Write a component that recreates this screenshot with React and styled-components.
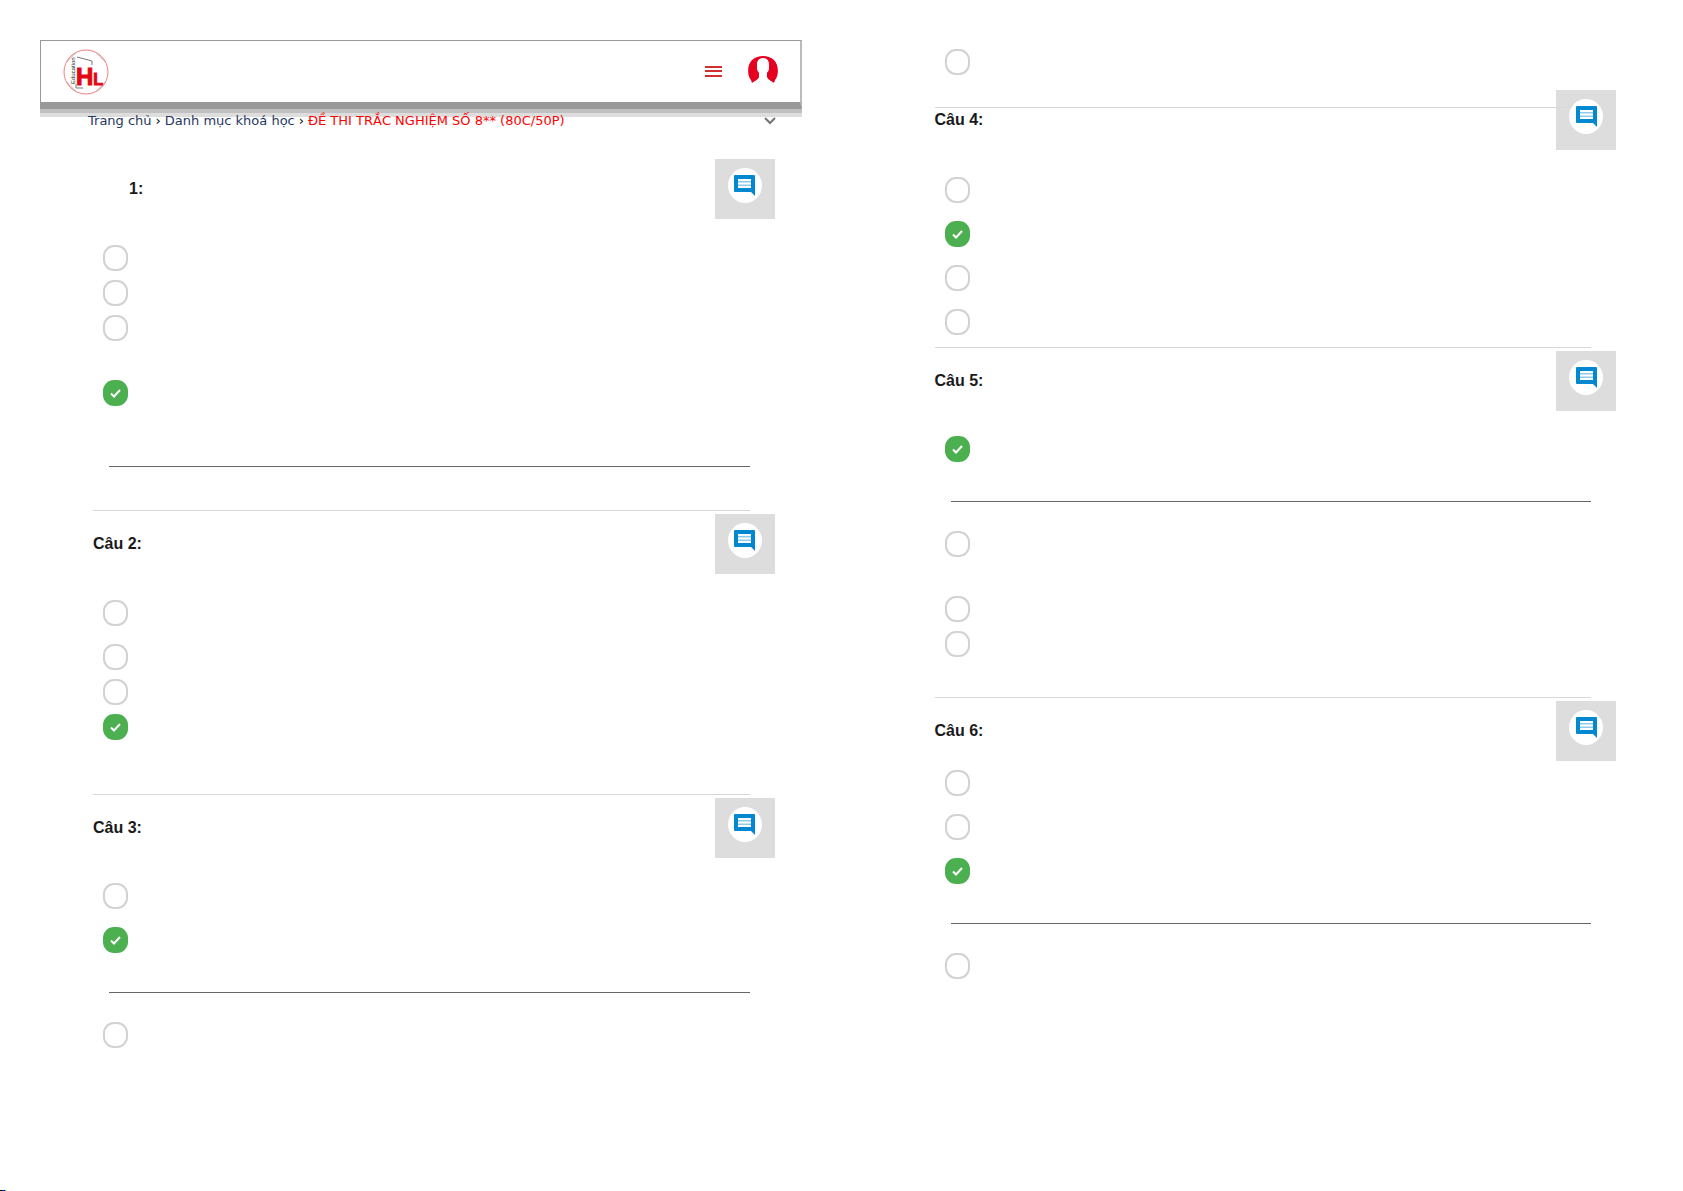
import React, { useState } from 'react';
import styled, { createGlobalStyle } from 'styled-components';

const GlobalStyle = createGlobalStyle`
    * {
        box-sizing: border-box;
    }

    body {
        margin: 0;
        background: #fff;
        color: #222;
        font-family: "Liberation Sans", Arial, sans-serif;
    }
`

const Page = styled.div`
    display: flex;
    flex-direction: column;
    min-height: 100vh;
`

const Spread = styled.main`
    display: grid;
    grid-template-columns: 1fr 1fr;
    flex: 1;
`

const Sheet = styled.div`
    padding-top: ${({ $top }) => $top}px;
`

const Header = styled.header`
    display: flex;
    align-items: center;
    height: 69px;
    margin: 0 40px;
    padding: 0 22px;
    border: 1px solid #999;
    border-right: 2px solid #bbb;
    border-bottom: 7px solid #999;
    box-shadow: 0 4px 0 #c0c0c0, 0 8px 0 #ddd;
`

const HomeLink = styled.a`
    display: flex;
    margin-right: auto;
`

const IconButton = styled.button`
    display: flex;
    padding: 0;
    border: none;
    background: none;
    color: ${({ $color }) => $color};
    cursor: pointer;
`

const HeaderActions = styled.div`
    display: flex;
    align-items: center;
    gap: 26px;
    padding-bottom: 4px;
`

const MenuButton = styled(IconButton)`
    padding-top: 4px;
`

const Breadcrumb = styled.nav`
    display: flex;
    align-items: center;
    gap: 4px;
    margin: 4px 66px 30px 88px;
    font-family: "DejaVu Sans", Verdana, sans-serif;
    font-size: 13px;
    line-height: 16px;
    white-space: nowrap;
`

const Crumb = styled.a`
    color: ${({ $current }) => ($current ? '#ff0000' : '#1f3864')};
    text-decoration: none;
`

const Separator = styled.span`
    color: #000;
`

const CrumbToggle = styled(IconButton)`
    margin-left: auto;
`

const Content = styled.div`
    padding: 0 92px 0 93px;
`

const Divider = styled.hr`
    position: relative;
    z-index: 1;
    height: 1px;
    margin: ${({ $space }) => $space}px 0 0;
    border: none;
    background: #d8d8d8;
`

const AnswerLine = styled.hr`
    height: 1px;
    margin: ${({ $space }) => $space}px 0 0 16px;
    border: none;
    background: #666;
`

const QuestionHead = styled.div`
    display: flex;
    align-items: center;
    justify-content: space-between;
    margin-top: ${({ $space }) => $space}px;
    margin-right: -25px;
`

const QuestionTitle = styled.h2`
    margin: 0 0 0 ${({ $indent }) => $indent || 0}px;
    font-size: 16px;
    line-height: 20px;
    color: #1a1a1a;
`

const CommentBox = styled.div`
    display: flex;
    justify-content: center;
    width: 60px;
    height: 60px;
    padding-top: 9px;
    background: #ddd;
`

const CommentButton = styled.button`
    position: relative;
    z-index: 2;
    display: flex;
    align-items: center;
    justify-content: center;
    width: 34px;
    height: 35px;
    padding: 0;
    border: none;
    border-radius: 50%;
    background: #fff;
    cursor: pointer;
`

const Option = styled.label`
    display: grid;
    width: 25px;
    margin: ${({ $space }) => $space}px 0 0 10px;
    place-items: center;
    cursor: pointer;

    > * {
        grid-area: 1 / 1;
    }
`

const Radio = styled.input`
    appearance: none;
    width: 25px;
    height: 26px;
    margin: 0;
    border: 2px solid #d2d2d2;
    border-radius: 11px;
    background: #fff;

    &:checked {
        border-color: #4caf50;
        background: #4caf50;
    }
`

const Tick = styled.svg`
    pointer-events: none;
`

const PrintMark = styled.div`
    width: 6px;
    height: 1px;
    background: linear-gradient(90deg, #000 40%, #22f 40% 60%, #000 60% 80%, #2cc 80%);
`

const Logo = () => (
    <svg width="46" height="46" viewBox="0 0 46 46" role="img" aria-label="HL Education">
        <circle cx="23" cy="23" r="22" fill="#fff" stroke="#f08080" strokeWidth="1" />
        <path d="M3.500 33 L13 42.500 M3.500 13 L13 3.500 M33 3.500 L42.500 13 M42.500 33 L33 42.500" stroke="#c9a0a0" />
        <path d="M14 8 L29 12 V16 M13 35 V39 H20" fill="none" stroke="#777" />
        <text x="13" y="36" fill="#e30613" stroke="#e30613" strokeWidth="1" fontFamily="'Liberation Sans Narrow', 'Liberation Sans', sans-serif" fontWeight="700" fontSize="24">
            H<tspan fontSize="16">L</tspan>
        </text>
        <text transform="translate(12 35) rotate(-90)" fill="#222" fontFamily="'Liberation Sans', sans-serif" fontSize="6">Education</text>
    </svg>
)

const MenuIcon = () => (
    <svg width="17" height="11" viewBox="0 0 17 11" fill="currentColor" aria-hidden="true">
        <rect width="17" height="2" />
        <rect y="4" width="17" height="2" />
        <rect y="9" width="17" height="2" />
    </svg>
)

const UserIcon = () => (
    <svg width="30" height="30" viewBox="0 0 30 30" aria-hidden="true">
        <path d="M4 28 L3 25 C-1 20 -1 10 4 5 C10 -0.500 20 -0.500 26 5 C31 10 31 20 27 25 L26 28 L19 24 H11 Z" fill="#e6001f" />
        <path d="M9 9 C9 1 21 1 21 9 V14 C21 16 19 17 19 18 V22 C20 25 24 26 28 30 H2 C6 26 10 25 11 22 V18 C11 17 9 16 9 14 Z" fill="#fff" />
    </svg>
)

const ChevronIcon = () => (
    <svg width="12" height="8" viewBox="0 0 12 8" fill="none" stroke="currentColor" strokeWidth="2" aria-hidden="true">
        <path d="M1 1 L6 6 L11 1" />
    </svg>
)

const CommentIcon = () => (
    <svg width="21" height="21" viewBox="0 0 21 21" aria-hidden="true">
        <path d="M1 0 H20 Q21 0 21 1 V21 L17 17 H1 Q0 17 0 16 V1 Q0 0 1 0 Z" fill="#0288d1" />
        <rect x="4" y="4" width="13" height="9" fill="#8ecbea" />
        <path d="M4 5 H17 M4 8.500 H17 M4 12 H17" stroke="#fff" strokeWidth="2" />
    </svg>
)

const QUESTIONS = {
    q1: { title: '1:', indent: 36, headSpace: 0, answer: 3 },
    q2: { title: 'Câu 2:', headSpace: 3, answer: 3 },
    q3: { title: 'Câu 3:', headSpace: 3, answer: 1 },
    q4: { title: 'Câu 4:', headSpace: -18, answer: 1 },
    q5: { title: 'Câu 5:', headSpace: 3, answer: 0 },
    q6: { title: 'Câu 6:', headSpace: 3, answer: 2 },
}

// space: gap above an option, line: gap above an answer underline
const LEFT = [
    { id: 'q1', rows: [{ space: 26 }, { space: 9 }, { space: 9 }, { space: 39 }, { line: 60 }] },
    { id: 'q2', divider: 43, rows: [{ space: 26 }, { space: 18 }, { space: 9 }, { space: 9 }] },
    { id: 'q3', divider: 54, rows: [{ space: 25 }, { space: 18 }, { line: 39 }, { space: 29 }] },
]

const RIGHT = [
    { id: 'q4', divider: 32, rows: [{ space: 27 }, { space: 18 }, { space: 18 }, { space: 18 }] },
    { id: 'q5', divider: 12, rows: [{ space: 25 }, { line: 39 }, { space: 29 }, { space: 39 }, { space: 9 }] },
    { id: 'q6', divider: 40, rows: [{ space: 9 }, { space: 18 }, { space: 18 }, { line: 39 }, { space: 29 }] },
]

const Answer = ({ id, index, space, answers, onPick }) => {
    const checked = answers[id] === index;

    return <Option $space={space}>
        <Radio
            type="radio"
            name={id}
            aria-label={`${QUESTIONS[id].title} ${'ABCD'[index]}`}
            checked={checked}
            onChange={() => onPick(id, index)}
        />
        {checked && (
            <Tick width="11" height="9" viewBox="0 0 11 9" fill="none" stroke="#fff" strokeWidth="2" aria-hidden="true">
                <path d="M1 4.500 L4 7.500 L10 1" />
            </Tick>
        )}
    </Option>
}

const Question = ({ id, divider, rows, answers, onPick }) => {
    const { title, indent, headSpace } = QUESTIONS[id];
    let index = -1;

    return <section>
        {divider && <Divider $space={divider} />}
        <QuestionHead $space={headSpace}>
            <QuestionTitle $indent={indent}>{title}</QuestionTitle>
            <CommentBox>
                <CommentButton type="button" aria-label={`Bình luận ${title}`}>
                    <CommentIcon />
                </CommentButton>
            </CommentBox>
        </QuestionHead>
        {rows.map((row, i) => {
            if (row.line) {
                return <AnswerLine key={i} $space={row.line} />
            }
            index += 1;
            return <Answer key={i} id={id} index={index} space={row.space} answers={answers} onPick={onPick} />
        })}
    </section>
}

const App = () => {
    const [answers, updateAnswers] = useState(
        Object.fromEntries(Object.entries(QUESTIONS).map(([id, { answer }]) => [id, answer]))
    );
    const handlePick = (id, index) => {
        updateAnswers({ ...answers, [id]: index });
    }

    return <Page>
        <GlobalStyle />
        <Spread>
            <Sheet $top={40}>
                <Header>
                    <HomeLink href="#home"><Logo /></HomeLink>
                    <HeaderActions>
                        <MenuButton type="button" $color="#d32f2f" aria-label="Menu"><MenuIcon /></MenuButton>
                        <IconButton type="button" aria-label="Tài khoản"><UserIcon /></IconButton>
                    </HeaderActions>
                </Header>
                <Breadcrumb>
                    <Crumb href="#home">Trang chủ</Crumb>
                    <Separator>›</Separator>
                    <Crumb href="#courses">Danh mục khoá học</Crumb>
                    <Separator>›</Separator>
                    <Crumb href="#exam" $current>ĐỀ THI TRẮC NGHIỆM SỐ 8** (80C/50P)</Crumb>
                    <CrumbToggle type="button" $color="#757575" aria-label="Mở rộng"><ChevronIcon /></CrumbToggle>
                </Breadcrumb>
                <Content>
                    {LEFT.map((question) => (
                        <Question key={question.id} {...question} answers={answers} onPick={handlePick} />
                    ))}
                </Content>
            </Sheet>
            <Sheet $top={49}>
                <Content>
                    <Answer id="q3" index={3} space={0} answers={answers} onPick={handlePick} />
                    {RIGHT.map((question) => (
                        <Question key={question.id} {...question} answers={answers} onPick={handlePick} />
                    ))}
                </Content>
            </Sheet>
        </Spread>
        <PrintMark />
    </Page>
}

export default App;
